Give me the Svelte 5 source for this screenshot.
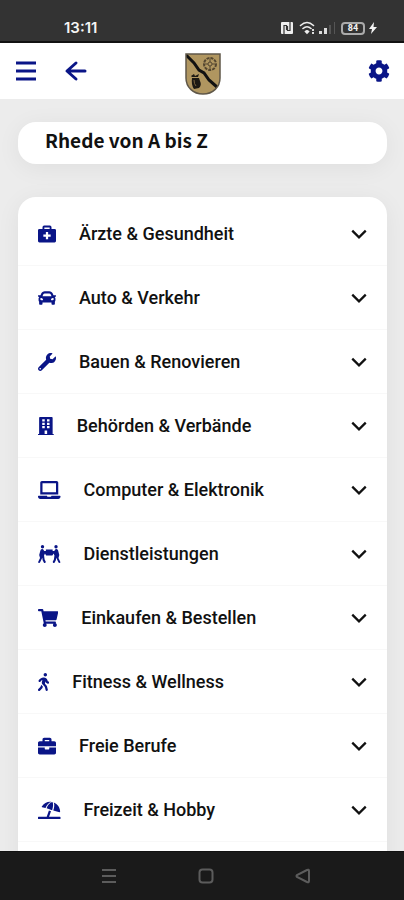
<script lang="ts">
	type Shape = { w: number; d: string };

	// Icon outlines share a 512-unit height, w is the width of the view box.
	const icons: Record<string, Shape> = {
		medkit: {
			w: 512,
			d: 'M128 112V64a48 48 0 0 1 48-48h160a48 48 0 0 1 48 48v48h88a40 40 0 0 1 40 40v304a40 40 0 0 1-40 40H40a40 40 0 0 1-40-40V152a40 40 0 0 1 40-40zm52 0h152V68H180zM224 200v72h-72v64h72v72h64v-72h72v-64h-72v-72z'
		},
		car: {
			w: 512,
			d: 'M499.99 176h-59.87l-16.64-41.6C406.38 91.63 365.57 64 319.5 64h-127c-46.06 0-86.88 27.63-103.99 70.4L71.87 176H12.01C4.2 176-1.53 183.34.37 190.91l6 24C7.7 220.25 12.5 224 18.01 224h20.07C24.65 235.73 16 252.78 16 272v48c0 16.12 6.16 30.67 16 41.93V416c0 17.67 14.33 32 32 32h32c17.67 0 32-14.33 32-32v-32h256v32c0 17.67 14.33 32 32 32h32c17.67 0 32-14.33 32-32v-54.07c9.84-11.25 16-25.8 16-41.93v-48c0-19.22-8.65-36.27-22.07-48H494c5.51 0 10.31-3.75 11.64-9.09l6-24c1.89-7.57-3.84-14.91-11.65-14.91zm-352.06-17.83c7.29-18.22 24.94-30.17 44.57-30.17h127c19.63 0 37.28 11.95 44.57 30.17L384 208H128l19.93-49.83zM96 319.8c-19.2 0-32-12.76-32-31.9S76.8 256 96 256s48 28.71 48 47.85-28.8 15.95-48 15.95zm320 0c-19.2 0-48 3.19-48-15.95S396.8 256 416 256s32 12.76 32 31.9-12.8 31.9-32 31.9z'
		},
		wrench: {
			w: 512,
			d: 'M507.73 109.1c-2.24-9.03-13.54-12.09-20.12-5.51l-74.36 74.36-67.88-11.31-11.31-67.88 74.36-74.36c6.62-6.62 3.43-17.9-5.66-20.16-47.38-11.74-99.55.91-136.58 37.93-39.64 39.64-50.55 97.1-34.05 147.2L18.74 402.76c-24.99 24.99-24.99 65.51 0 90.5 24.99 24.99 65.51 24.99 90.5 0l213.21-213.21c50.12 16.71 107.47 5.68 147.37-34.22 37.07-37.07 49.7-89.32 37.91-136.73zM64 472c-13.26 0-24-10.75-24-24 0-13.26 10.75-24 24-24s24 10.75 24 24c0 13.25-10.75 24-24 24z'
		},
		building: {
			w: 448,
			d: 'M436 480h-20V24c0-13.25-10.75-24-24-24H56C42.75 0 32 10.75 32 24v456H12c-6.63 0-12 5.37-12 12v20h448v-20c0-6.63-5.37-12-12-12zM120 64h72v64h-72zM256 64h72v64h-72zM120 160h72v64h-72zM256 160h72v64h-72zM120 256h72v64h-72zM256 256h72v64h-72zM188 384h72v96h-72z'
		},
		laptop: {
			w: 640,
			d: 'M624 416H381.54c-.74 19.81-14.71 32-32.74 32H288c-18.69 0-33.02-17.47-32.77-32H16c-8.8 0-16 7.2-16 16v16c0 35.2 28.8 64 64 64h512c35.2 0 64-28.8 64-64v-16c0-8.8-7.2-16-16-16zM576 48c0-26.4-21.6-48-48-48H112C85.6 0 64 21.6 64 48v336h512V48zm-64 272H128V64h384v256z'
		},
		carry: {
			w: 640,
			d: 'M128 0a48 48 0 1 1 0 96a48 48 0 1 1 0-96zM512 0a48 48 0 1 1 0 96a48 48 0 1 1 0-96zM224 128h192v40h48l20-32q14-24 44-20q34 4 44 38l34 130-24 84 54 112q6 32-28 32-20 0-28-20l-62-126-10 70-38 66q-20 16-40 0-14-12-8-30l30-60 16-110-26-62-28 48q-8 12-24 12H250q-16 0-24-12l-28-48-26 62 16 110 30 60q6 18-8 30-20 16-40 0l-38-66-10-70-62 126q-8 20-28 20-34 0-28-32l54-112-24-84 34-130q10-34 44-38 30-4 44 20l20 32h48z'
		},
		cart: {
			w: 576,
			d: 'M528.12 301.32l47.27-208C578.8 78.3 567.39 64 551.99 64H159.21l-9.17-44.81C147.76 8.02 137.93 0 126.53 0H24C10.75 0 0 10.75 0 24v16c0 13.25 10.75 24 24 24h69.88l70.25 343.43C147.33 417.1 136 435.22 136 456c0 30.93 25.07 56 56 56s56-25.07 56-56c0-15.67-6.45-29.84-16.82-40h209.64C430.45 426.16 424 440.33 424 456c0 30.93 25.07 56 56 56s56-25.07 56-56c0-22.17-12.89-41.33-31.58-50.4l5.52-24.28c3.41-15.02-8-29.32-23.4-29.32H218.12l-6.55-32h293.15c11.2 0 20.92-7.75 23.4-18.68z'
		},
		walking: {
			w: 320,
			d: 'M208 96c26.5 0 48-21.5 48-48S234.5 0 208 0s-48 21.5-48 48 21.5 48 48 48zm94.5 149.1l-23.3-11.8-9.7-29.4c-14.7-44.6-55.7-75.8-102.2-75.9-36-.1-55.9 10.1-93.3 25.2-21.6 8.7-39.3 25.2-49.7 46.2L17.6 213c-7.8 15.8-1.5 35 14.2 42.9 15.6 7.9 34.6 1.5 42.5-14.3L81 228c3.5-7 9.3-12.5 16.5-15.4l26.8-10.8-15.2 60.7c-5.2 20.8.4 42.9 14.9 58.8l59.9 65.4c7.2 7.9 12.3 17.4 14.9 27.7l18.3 73.3c4.3 17.1 21.7 27.6 38.8 23.3 17.1-4.3 27.6-21.7 23.3-38.8l-22.2-89c-2.6-10.3-7.7-19.9-14.9-27.7l-45.5-49.7 17.2-68.7 5.5 16.5c5.3 16.1 16.7 29.4 31.7 37l23.3 11.8c15.6 7.9 34.6 1.5 42.5-14.3 7.7-15.7 1.4-35.1-14.3-43zM73.6 385.8c-3.2 8.1-8 15.4-14.2 21.5l-50 50.1c-12.5 12.5-12.5 32.8 0 45.3s32.7 12.5 45.2 0l59.4-59.4c6.1-6.1 10.9-13.4 14.2-21.5l13.5-33.8c-55.3-60.3-38.7-41.8-47.4-53.7l-20.7 51.5z'
		},
		briefcase: {
			w: 512,
			d: 'M320 336c0 8.84-7.16 16-16 16h-96c-8.84 0-16-7.16-16-16v-36H0v148c0 25.6 22.4 48 48 48h416c25.6 0 48-22.4 48-48V300H320v36zm144-216h-80V68c0-25.6-22.4-48-48-48H176c-25.6 0-48 22.4-48 48v52H48c-25.6 0-48 22.4-48 48v92h512v-92c0-25.6-22.4-48-48-48zm-144 0H192V84h128v36z'
		},
		beach: {
			w: 640,
			d: 'M16 448h232l62-180 60 22-56 158h310q16 0 16 16v32q0 16-16 16H16q-16 0-16-16v-32q0-16 16-16zM108 158C168 56 280 6 380 22 300 50 246 122 214 198l-98-20q-14-6-8-20zM412 30C440 70 432 170 402 262L246 208C282 110 350 34 412 30zM450 42C556 82 626 186 630 300q0 18-18 18l-178-46C462 190 474 106 450 42z'
		}
	};

	const cog =
		'M487.4 315.7l-42.6-24.6c4.3-23.2 4.3-47 0-70.2l42.6-24.6c4.9-2.8 7.1-8.6 5.5-14-11.1-35.6-30-67.8-54.7-94.6-3.8-4.1-10-5.1-14.8-2.3L380.8 110c-17.9-15.4-38.5-27.3-60.8-35.1V25.8c0-5.6-3.9-10.5-9.4-11.7-36.7-8.2-74.3-7.8-109.2 0-5.5 1.2-9.4 6.1-9.4 11.7V75c-22.2 7.9-42.8 19.8-60.8 35.1L88.7 85.5c-4.9-2.8-11-1.9-14.8 2.3-24.7 26.7-43.6 58.9-54.7 94.6-1.7 5.4.6 11.2 5.5 14L67.3 221c-4.3 23.2-4.3 47 0 70.2l-42.6 24.6c-4.9 2.8-7.1 8.6-5.5 14 11.1 35.6 30 67.8 54.7 94.6 3.8 4.1 10 5.1 14.8 2.3l42.6-24.6c17.9 15.4 38.5 27.3 60.8 35.1v49.2c0 5.6 3.9 10.5 9.4 11.7 36.7 8.2 74.3 7.8 109.2 0 5.5-1.2 9.4-6.1 9.4-11.7v-49.2c22.2-7.9 42.8-19.8 60.8-35.1l42.6 24.6c4.9 2.8 11 1.9 14.8-2.3 24.7-26.7 43.6-58.9 54.7-94.6 1.5-5.5-.7-11.3-5.6-14.1zM256 336c-44.1 0-80-35.9-80-80s35.9-80 80-80 80 35.9 80 80-35.9 80-80 80z';

	const categories = [
		{ icon: 'medkit', label: 'Ärzte & Gesundheit' },
		{ icon: 'car', label: 'Auto & Verkehr' },
		{ icon: 'wrench', label: 'Bauen & Renovieren' },
		{ icon: 'building', label: 'Behörden & Verbände' },
		{ icon: 'laptop', label: 'Computer & Elektronik' },
		{ icon: 'carry', label: 'Dienstleistungen' },
		{ icon: 'cart', label: 'Einkaufen & Bestellen' },
		{ icon: 'walking', label: 'Fitness & Wellness' },
		{ icon: 'briefcase', label: 'Freie Berufe' },
		{ icon: 'beach', label: 'Freizeit & Hobby' }
	];
</script>

<div class="app">
	<div class="status">
		<span class="time">13:11</span>
		<div class="indicators">
			<svg class="nfc" viewBox="0 0 12 12" aria-hidden="true">
				<rect width="12" height="12" rx="1" fill="#eee" />
				<path d="M3 12V3.5h2.5V8M6.5 4V8.5H9V0" fill="none" stroke="#333" stroke-width="1.2" />
			</svg>
			<svg class="signal" viewBox="0 0 38 16" aria-hidden="true">
				<g fill="none" stroke="#eee" stroke-width="1.6" stroke-linecap="round">
					<path d="M1.5 5.5Q8-.5 14.5 5.5M4 8.500Q8 5 12 8.500" />
					<path d="M6.5 11.5Q8 10 9.5 11.5L8 13z" fill="#eee" />
				</g>
				<path d="M13 9h2v2h-2zM13 12h2v2h-2zM20 11h3v3h-3zM25 8h3v6h-3z" fill="#ddd" />
				<path d="M30 5h2v9h-2zM35 2h1v12h-1z" fill="#555" />
			</svg>
			<span class="battery">84</span>
			<svg class="bolt" viewBox="0 0 8 12" aria-hidden="true">
				<path d="M5 0L0 7h3l-1 5 6-7H4.5z" fill="#f4f4f4" />
			</svg>
		</div>
	</div>

	<header>
		<button class="menu" aria-label="Menü">
			<svg viewBox="0 0 24 24" aria-hidden="true">
				<path d="M2 4h20M2 12h20M2 20h20" />
			</svg>
		</button>
		<button class="back" aria-label="Zurück">
			<svg viewBox="0 0 24 24" aria-hidden="true">
				<path d="M21 12H4M12 4L3 12l9 8" stroke-linecap="round" stroke-linejoin="round" />
			</svg>
		</button>
		<svg class="crest" viewBox="0 0 36 42" role="img" aria-label="Wappen Rhede">
			<defs>
				<clipPath id="shield">
					<path d="M1 1h34v24c0 9-7 16-17 16S1 34 1 25z" />
				</clipPath>
			</defs>
			<path d="M1 1h34v24c0 9-7 16-17 16S1 34 1 25z" fill="#b09660" />
			<path
				d="M0 1l9 9 5 7 5 3 5 7 8 7"
				fill="none"
				stroke="#111"
				stroke-width="3"
				clip-path="url(#shield)"
			/>
			<g fill="none" stroke="#544630">
				<circle cx="25" cy="11" r="6" stroke-width="2" stroke-dasharray="3 1" />
				<circle cx="25" cy="11" r="2" />
				<path d="M25 6v3M25 13v3M20 11h3M27 11h3" />
			</g>
			<path d="M7 25h7l1 3q2 4-1 7l-5 1q-3-4-2-11zM6 23l3-2 1 2 4-2-1 3H7z" fill="#1c1812" />
			<path d="M9 27q0 4 2 6" fill="none" stroke="#7a6440" />
			<path
				d="M1 1h34v24c0 9-7 16-17 16S1 34 1 25z"
				fill="none"
				stroke="#5f5748"
				stroke-width="1.5"
			/>
		</svg>
		<button class="settings" aria-label="Einstellungen">
			<svg viewBox="0 0 512 512" aria-hidden="true"><path d={cog} /></svg>
		</button>
	</header>

	<main>
		<h1>Rhede von A bis Z</h1>
		<ul>
			{#each categories as { icon, label } (label)}
				<li>
					<button class="row" aria-expanded="false">
						<svg class="icon" viewBox="0 0 {icons[icon].w} 512" aria-hidden="true">
							<path d={icons[icon].d} fill-rule="evenodd" />
						</svg>
						<span>{label}</span>
						<svg class="chevron" viewBox="0 0 16 16" aria-hidden="true">
							<path d="M2 5l6 6 6-6" />
						</svg>
					</button>
				</li>
			{/each}
		</ul>
	</main>

	<nav aria-label="System">
		<button aria-label="Übersicht">
			<svg viewBox="0 0 16 16" aria-hidden="true"><path d="M1 2h14M1 8h14M1 14h14" /></svg>
		</button>
		<button aria-label="Startseite">
			<svg viewBox="0 0 16 16" aria-hidden="true">
				<rect x="1.5" y="1.5" width="13" height="13" rx="3" />
			</svg>
		</button>
		<button aria-label="Zurück">
			<svg viewBox="0 0 16 16" aria-hidden="true">
				<path d="M14 3v10q0 2-2 1L2 9q-1-1 0-2l10-5q2-1 2 1z" />
			</svg>
		</button>
	</nav>
</div>

<style>
	:global(body) {
		margin: 0;
	}

	.app {
		--blue: #0a1587;
		display: flex;
		flex-direction: column;
		height: 100vh;
		background: #ececec;
		color: #111;
		font-family: Roboto, 'Liberation Sans', sans-serif;
	}

	button {
		display: flex;
		align-items: center;
		padding: 0;
		border: 0;
		background: none;
		color: inherit;
		font: inherit;
		cursor: pointer;
	}

	.status {
		display: flex;
		flex: none;
		justify-content: space-between;
		box-sizing: border-box;
		height: 43px;
		padding: 14px 27px 0 64px;
		border-bottom: 2px solid #111;
		background: #333;
		color: #f4f4f4;
	}
	.time {
		font: 600 15px/28px Inter, sans-serif;
	}
	.indicators {
		display: flex;
		align-items: center;
		height: 28px;
	}
	.nfc {
		width: 12px;
		height: 12px;
		margin-right: 6px;
	}
	.signal {
		width: 38px;
		height: 16px;
		margin-right: 4px;
	}
	.battery {
		box-sizing: border-box;
		width: 24px;
		height: 13px;
		margin-right: 4px;
		border: 2px solid #aaa;
		border-radius: 4px;
		font-weight: 700;
		font-size: 9px;
		line-height: 9px;
		text-align: center;
	}
	.bolt {
		width: 8px;
		height: 12px;
	}

	header {
		display: grid;
		flex: none;
		grid-template-columns: 52px 1fr auto 1fr 50px;
		align-items: center;
		height: 56px;
		background: #fff;
	}
	header button svg {
		width: 24px;
		height: 24px;
		fill: none;
		stroke: var(--blue);
		stroke-width: 3;
	}
	.menu {
		justify-content: center;
	}
	.back {
		justify-self: start;
		padding-left: 12px;
	}
	.crest {
		width: 36px;
		height: 42px;
		margin-top: 6px;
	}
	.settings {
		grid-column: 5;
		justify-content: center;
	}
	.settings svg {
		width: 22px;
		height: 22px;
		fill: var(--blue);
		stroke: none;
	}

	main {
		display: flex;
		flex: 1;
		flex-direction: column;
		gap: 33px;
		min-height: 0;
		padding: 23px 17px 0 18px;
		overflow: hidden;
	}
	h1,
	ul {
		flex: none;
		margin: 0;
		border-radius: 18px;
		background: #fff;
		box-shadow: 0 4px 24px rgba(0, 0, 0, 0.06);
	}
	h1 {
		padding: 2px 27px 8px;
		font: 700 19px/32px 'Noto Sans CJK SC', sans-serif;
	}
	ul {
		padding: 5px 0 64px;
		list-style: none;
	}
	li {
		border-bottom: 1px solid #f8f8f8;
	}
	.row {
		gap: 23px;
		width: 100%;
		height: 63px;
		padding: 0 19px 0 20px;
		font-weight: 500;
		font-size: 18px;
		line-height: 24px;
	}
	.icon {
		width: auto;
		height: 18px;
		fill: var(--blue);
	}
	.chevron {
		width: 18px;
		height: 18px;
		margin-left: auto;
		fill: none;
		stroke: #111;
		stroke-width: 2;
	}

	nav {
		display: grid;
		flex: none;
		grid-template-columns: repeat(3, 1fr);
		height: 48px;
		padding: 0 13% 0 15%;
		border-top: 1px solid #111;
		background: #1a1a1a;
	}
	nav button {
		justify-content: center;
	}
	nav svg {
		width: 16px;
		height: 16px;
		fill: none;
		stroke: #5c5c5c;
		stroke-width: 2;
	}
</style>
